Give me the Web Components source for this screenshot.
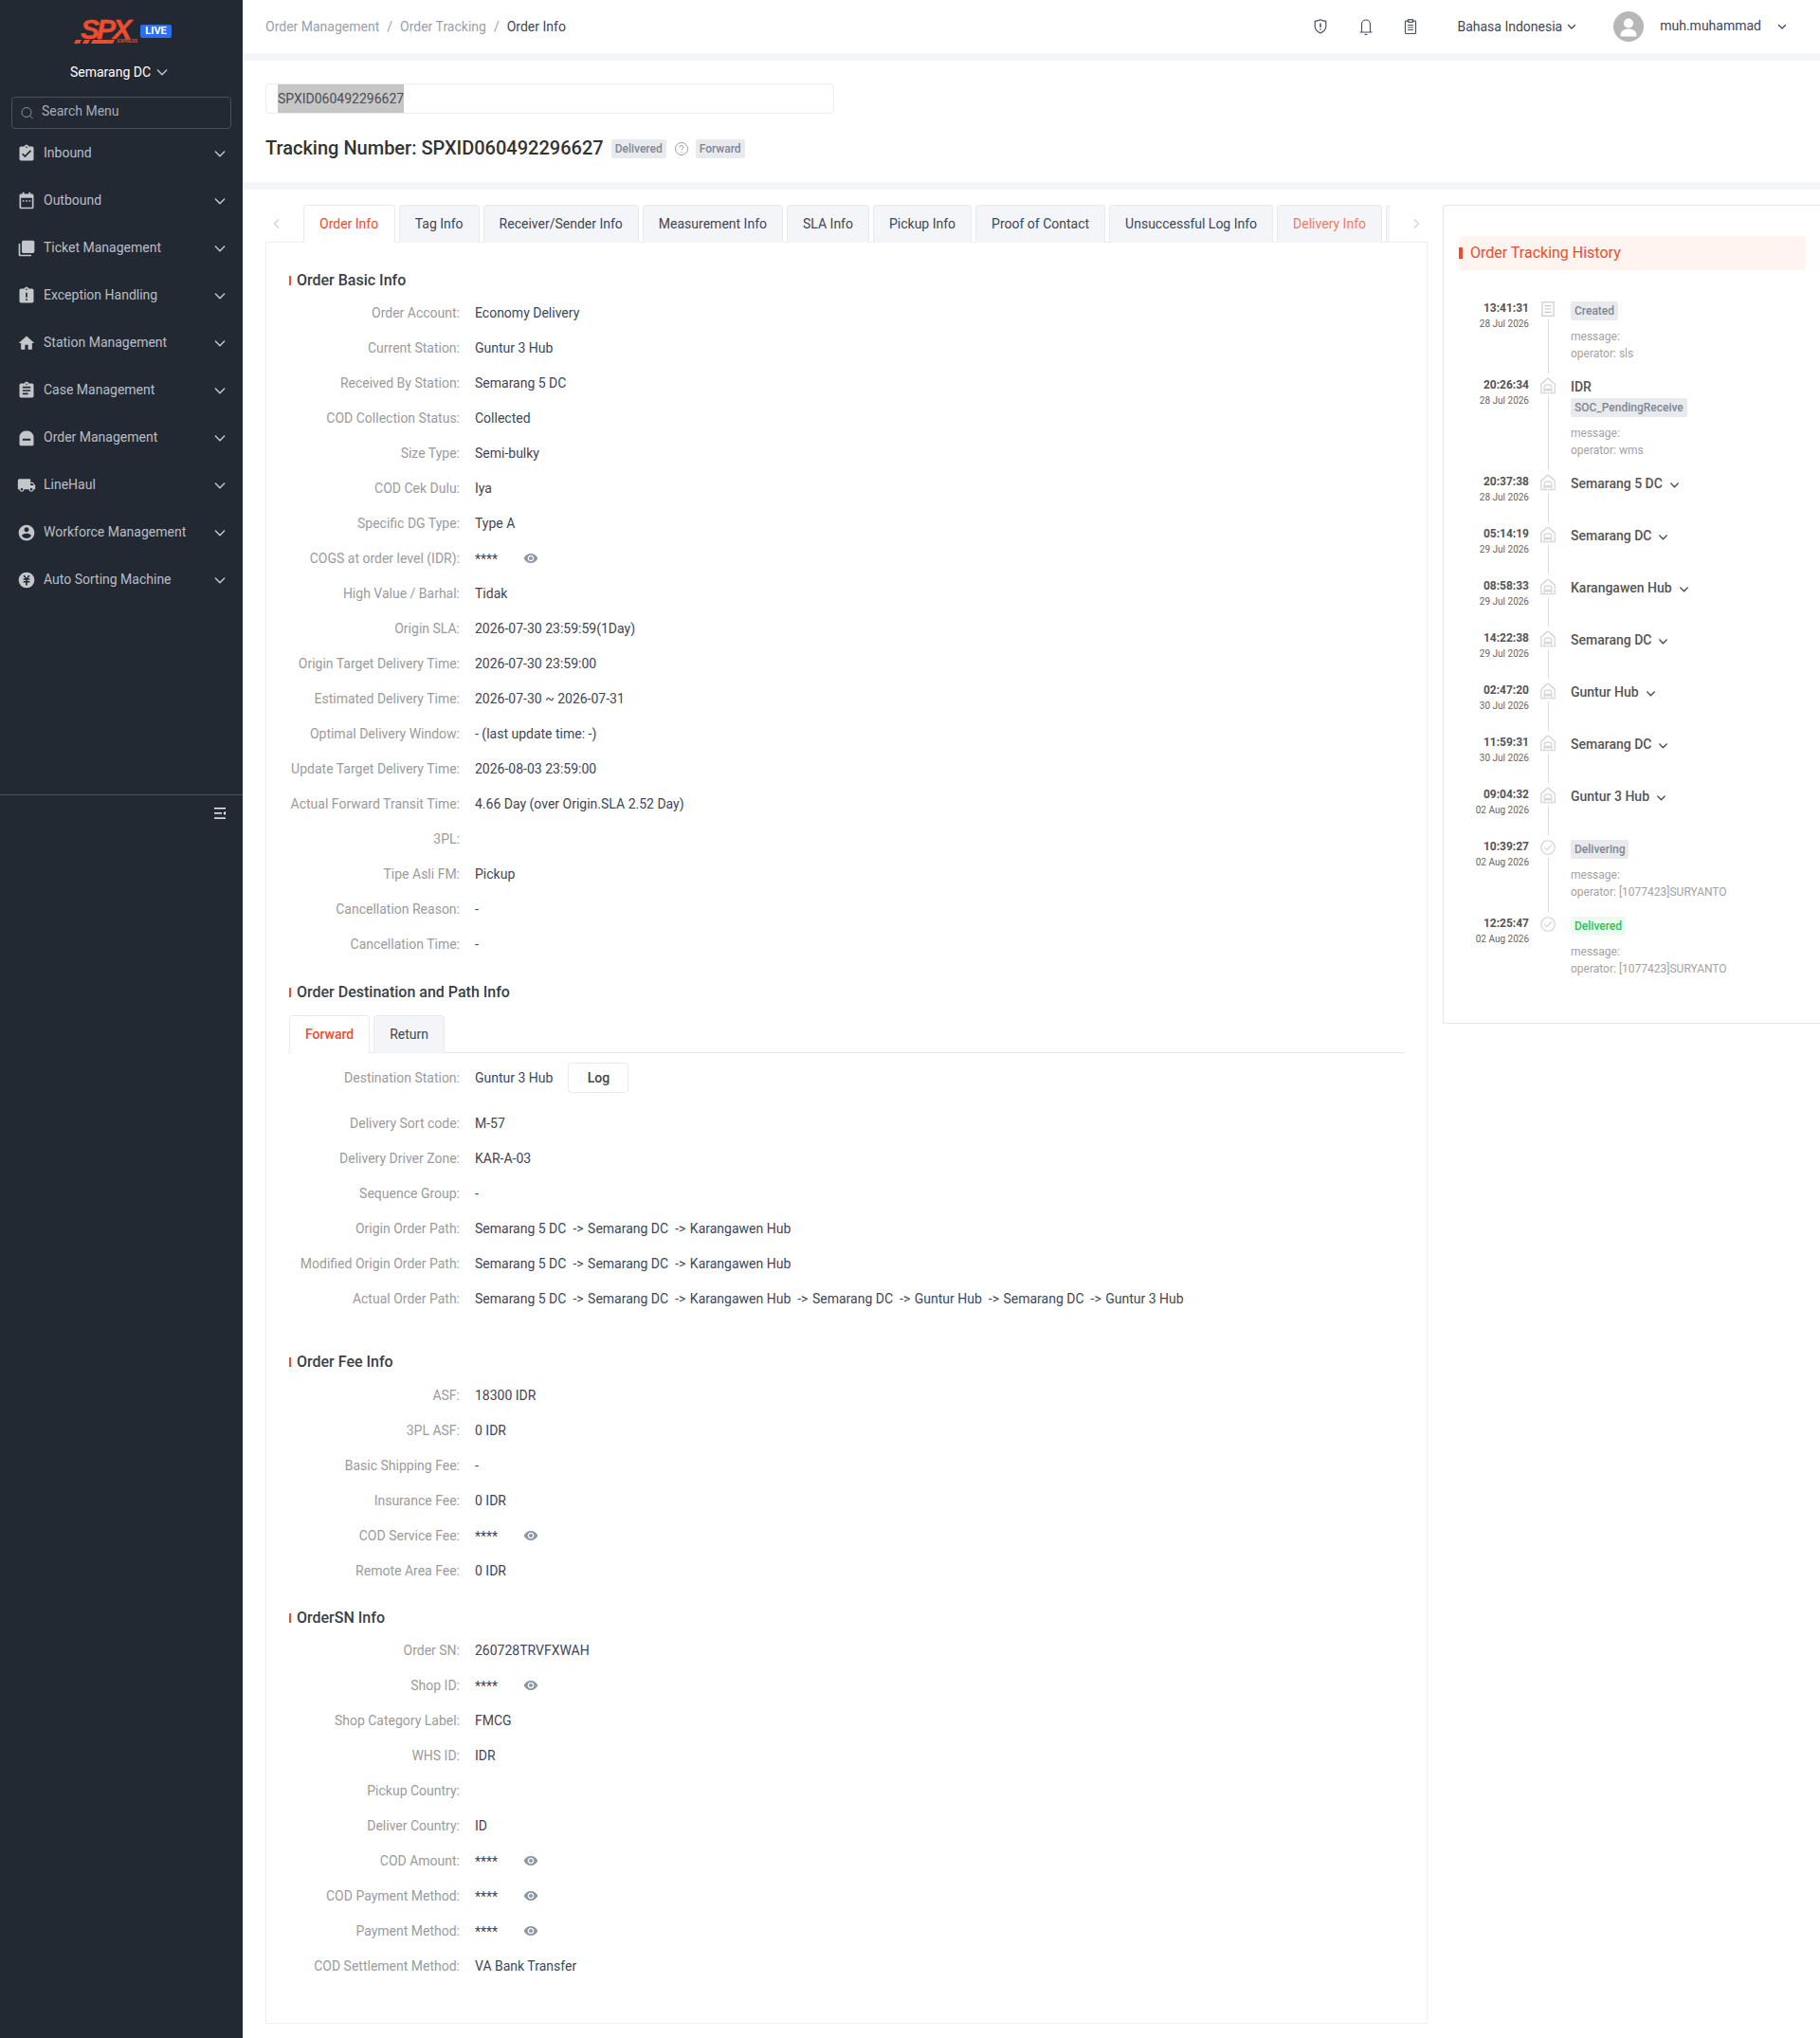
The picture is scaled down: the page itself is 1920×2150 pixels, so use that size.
<!DOCTYPE html>
<html lang="en">
<head>
<meta charset="utf-8">
<title>Order Info</title>
<style>
html,body{margin:0;padding:0;background:#fff;font-family:Roboto,"Noto Sans",sans-serif;font-size:14px;color:#3f4655}
</style>
</head>
<body>
<app-shell>
  <side-nav slot="side">
    <nav-item icon="inbound">Inbound</nav-item>
    <nav-item icon="outbound">Outbound</nav-item>
    <nav-item icon="ticket">Ticket Management</nav-item>
    <nav-item icon="exception">Exception Handling</nav-item>
    <nav-item icon="home">Station Management</nav-item>
    <nav-item icon="case">Case Management</nav-item>
    <nav-item icon="order">Order Management</nav-item>
    <nav-item icon="truck">LineHaul</nav-item>
    <nav-item icon="person">Workforce Management</nav-item>
    <nav-item icon="yen">Auto Sorting Machine</nav-item>
  </side-nav>
  <top-bar slot="top"></top-bar>
  <track-header slot="head" number="SPXID060492296627"></track-header>
  <info-tabs slot="left">
    <info-section title="Order Basic Info">
      <info-row label="Order Account">Economy Delivery</info-row>
      <info-row label="Current Station">Guntur 3 Hub</info-row>
      <info-row label="Received By Station">Semarang 5 DC</info-row>
      <info-row label="COD Collection Status">Collected</info-row>
      <info-row label="Size Type">Semi-bulky</info-row>
      <info-row label="COD Cek Dulu">Iya</info-row>
      <info-row label="Specific DG Type">Type A</info-row>
      <info-row label="COGS at order level (IDR)" masked></info-row>
      <info-row label="High Value / Barhal">Tidak</info-row>
      <info-row label="Origin SLA">2026-07-30 23:59:59(1Day)</info-row>
      <info-row label="Origin Target Delivery Time">2026-07-30 23:59:00</info-row>
      <info-row label="Estimated Delivery Time">2026-07-30 ~ 2026-07-31</info-row>
      <info-row label="Optimal Delivery Window">- (last update time: -)</info-row>
      <info-row label="Update Target Delivery Time">2026-08-03 23:59:00</info-row>
      <info-row label="Actual Forward Transit Time">4.66 Day (over Origin.SLA 2.52 Day)</info-row>
      <info-row label="3PL"></info-row>
      <info-row label="Tipe Asli FM">Pickup</info-row>
      <info-row label="Cancellation Reason">-</info-row>
      <info-row label="Cancellation Time">-</info-row>
    </info-section>
    <info-section title="Order Destination and Path Info" gap="21">
      <sub-tabs></sub-tabs>
      <info-row label="Destination Station" log>Guntur 3 Hub</info-row>
      <info-row label="Delivery Sort code">M-57</info-row>
      <info-row label="Delivery Driver Zone">KAR-A-03</info-row>
      <info-row label="Sequence Group">-</info-row>
      <info-row label="Origin Order Path"><path-line stops="Semarang 5 DC|Semarang DC|Karangawen Hub"></path-line></info-row>
      <info-row label="Modified Origin Order Path"><path-line stops="Semarang 5 DC|Semarang DC|Karangawen Hub"></path-line></info-row>
      <info-row label="Actual Order Path"><path-line stops="Semarang 5 DC|Semarang DC|Karangawen Hub|Semarang DC|Guntur Hub|Semarang DC|Guntur 3 Hub"></path-line></info-row>
    </info-section>
    <info-section title="Order Fee Info" gap="37" after="6">
      <info-row label="ASF">18300 IDR</info-row>
      <info-row label="3PL ASF">0 IDR</info-row>
      <info-row label="Basic Shipping Fee">-</info-row>
      <info-row label="Insurance Fee">0 IDR</info-row>
      <info-row label="COD Service Fee" masked></info-row>
      <info-row label="Remote Area Fee">0 IDR</info-row>
    </info-section>
    <info-section title="OrderSN Info">
      <info-row label="Order SN">260728TRVFXWAH</info-row>
      <info-row label="Shop ID" masked></info-row>
      <info-row label="Shop Category Label">FMCG</info-row>
      <info-row label="WHS ID">IDR</info-row>
      <info-row label="Pickup Country"></info-row>
      <info-row label="Deliver Country">ID</info-row>
      <info-row label="COD Amount" masked></info-row>
      <info-row label="COD Payment Method" masked></info-row>
      <info-row label="Payment Method" masked></info-row>
      <info-row label="COD Settlement Method">VA Bank Transfer</info-row>
    </info-section>
  </info-tabs>
  <history-panel slot="right">
    <history-item time="13:41:31" date="28 Jul 2026" icon="doc" tag="Created" operator="sls"></history-item>
    <history-item time="20:26:34" date="28 Jul 2026" icon="hub" name="IDR" tag="SOC_PendingReceive" operator="wms"></history-item>
    <history-item time="20:37:38" date="28 Jul 2026" icon="hub" name="Semarang 5 DC" fold></history-item>
    <history-item time="05:14:19" date="29 Jul 2026" icon="hub" name="Semarang DC" fold></history-item>
    <history-item time="08:58:33" date="29 Jul 2026" icon="hub" name="Karangawen Hub" fold></history-item>
    <history-item time="14:22:38" date="29 Jul 2026" icon="hub" name="Semarang DC" fold></history-item>
    <history-item time="02:47:20" date="30 Jul 2026" icon="hub" name="Guntur Hub" fold></history-item>
    <history-item time="11:59:31" date="30 Jul 2026" icon="hub" name="Semarang DC" fold></history-item>
    <history-item time="09:04:32" date="02 Aug 2026" icon="hub" name="Guntur 3 Hub" fold></history-item>
    <history-item time="10:39:27" date="02 Aug 2026" icon="check" tag="Delivering" operator="[1077423]SURYANTO"></history-item>
    <history-item time="12:25:47" date="02 Aug 2026" icon="check" tag="Delivered" green operator="[1077423]SURYANTO" last></history-item>
  </history-panel>
</app-shell>

<script>
const ICONS = {
  inbound:'<path d="M19 3h-4.18C14.4 1.84 13.3 1 12 1c-1.3 0-2.4.84-2.82 2H5c-1.1 0-2 .9-2 2v14c0 1.1.9 2 2 2h14c1.1 0 2-.9 2-2V5c0-1.1-.9-2-2-2zm-7 0c.55 0 1 .45 1 1s-.45 1-1 1-1-.45-1-1 .45-1 1-1zm-2 14l-4-4 1.41-1.41L10 14.17l6.59-6.59L18 9l-8 8z"/>',
  outbound:'<path fill-rule="evenodd" d="M7 1h2v2h6V1h2v2h2a2 2 0 0 1 2 2v15a2 2 0 0 1-2 2H5a2 2 0 0 1-2-2V5a2 2 0 0 1 2-2h2V1zM5 8v12h14V8H5zm2 3h2v2H7v-2zm4 0h2v2h-2v-2zm4 0h2v2h-2v-2z"/>',
  ticket:'<path d="M4 6H2v14c0 1.1.9 2 2 2h14v-2H4V6zm16-4H8c-1.1 0-2 .9-2 2v12c0 1.1.9 2 2 2h12c1.1 0 2-.9 2-2V4c0-1.1-.9-2-2-2z"/>',
  exception:'<path d="M19 3h-4.18C14.4 1.84 13.3 1 12 1c-1.3 0-2.4.84-2.82 2H5c-1.1 0-2 .9-2 2v14c0 1.1.9 2 2 2h14c1.1 0 2-.9 2-2V5c0-1.1-.9-2-2-2zm-6 15h-2v-2h2v2zm0-4h-2V8h2v6zm-1-9c-.55 0-1-.45-1-1s.45-1 1-1 1 .45 1 1-.45 1-1 1z"/>',
  home:'<path d="M10 20v-6h4v6h5v-8h3L12 3 2 12h3v8z"/>',
  case:'<path d="M19 3h-4.18C14.4 1.84 13.3 1 12 1c-1.3 0-2.4.84-2.82 2H5c-1.1 0-2 .9-2 2v14c0 1.1.9 2 2 2h14c1.1 0 2-.9 2-2V5c0-1.1-.9-2-2-2zm-7 0c.55 0 1 .45 1 1s-.45 1-1 1-1-.45-1-1 .45-1 1-1zm2 14H7v-2h7v2zm3-4H7v-2h10v2zm0-4H7V7h10v2z"/>',
  order:'<path fill-rule="evenodd" d="M3 11a8 8 0 0 1 8-8h2a8 8 0 0 1 8 8v9a2 2 0 0 1-2 2H5a2 2 0 0 1-2-2v-9zm4 2v2.400h10V13H7z"/>',
  truck:'<path d="M20 8h-3V4H3c-1.1 0-2 .9-2 2v11h2c0 1.66 1.34 3 3 3s3-1.34 3-3h6c0 1.66 1.34 3 3 3s3-1.34 3-3h2v-5l-3-4zM6 18.500c-.83 0-1.500-.67-1.500-1.500s.67-1.500 1.500-1.500 1.500.67 1.500 1.500-.67 1.500-1.500 1.500zm13.500-9l1.960 2.500H17V9.500h2.500zm-1.500 9c-.83 0-1.500-.67-1.500-1.500s.67-1.500 1.500-1.500 1.500.67 1.500 1.500-.67 1.500-1.500 1.500z"/>',
  person:'<path d="M12 2C6.48 2 2 6.48 2 12s4.48 10 10 10 10-4.48 10-10S17.52 2 12 2zm0 3c1.66 0 3 1.34 3 3s-1.34 3-3 3-3-1.34-3-3 1.34-3 3-3zm0 14.200c-2.500 0-4.710-1.280-6-3.220.03-1.990 4-3.080 6-3.080 1.990 0 5.970 1.090 6 3.080-1.290 1.940-3.500 3.220-6 3.220z"/>',
  yen:'<path fill-rule="evenodd" d="M12 2a10 10 0 1 0 0 20 10 10 0 0 0 0-20zM7.600 6h2.300L12 9.600 14.100 6h2.300l-2.700 4H16v1.700h-3v1.500h3V15h-3v3.500h-2V15H8v-1.800h3v-1.500H8V10h2.300L7.600 6z"/>'
};
const chevron=(s,c,w=2)=>`<svg width="${s}" height="${s}" viewBox="0 0 24 24" fill="none" stroke="${c}" stroke-width="${w}" stroke-linecap="round" stroke-linejoin="round" style="display:block;flex:none"><path d="M5 9l7 7 7-7"/></svg>`;
const EYE='<svg width="16" height="16" viewBox="0 0 24 24" fill="#8d97a5" style="display:block"><path d="M12 4.500C7 4.500 2.730 7.610 1 12c1.730 4.390 6 7.500 11 7.500s9.270-3.110 11-7.500c-1.730-4.390-6-7.500-11-7.500zM12 17c-2.760 0-5-2.240-5-5s2.240-5 5-5 5 2.240 5 5-2.240 5-5 5zm0-8c-1.660 0-3 1.340-3 3s1.340 3 3 3 3-1.340 3-3-1.340-3-3-3z"/></svg>';

class Base extends HTMLElement{
  render(html){ if(!this.shadowRoot) this.attachShadow({mode:'open'}); this.shadowRoot.innerHTML=html; }
}

class AppShell extends Base{
  connectedCallback(){this.render(`<style>
    :host{display:flex;width:1920px;height:2150px;overflow:hidden;background:#fff}
    .side{flex:none;width:256px}
    .main{flex:1;min-width:0;display:flex;flex-direction:column;background:#f4f5f9}
    .band{display:block;margin-bottom:8px;background:#fff}
    .content{flex:1;display:flex;gap:16px;background:#fff;padding:16px 0 0 24px;min-height:0}
    .left{flex:none;width:1226px}
    .right{flex:1;min-width:0}
  </style>
  <div class="side"><slot name="side"></slot></div>
  <div class="main">
    <div class="band"><slot name="top"></slot></div>
    <div class="band"><slot name="head"></slot></div>
    <div class="content">
      <div class="left"><slot name="left"></slot></div>
      <div class="right"><slot name="right"></slot></div>
    </div>
  </div>`);}
}
class SideNav extends Base{
  connectedCallback(){this.render(`<style>
    :host{display:flex;flex-direction:column;height:2150px;background:#222933;color:#b9bec6;font:14px Roboto,sans-serif}
    .logo{height:60px;box-sizing:border-box;padding:20px 0 0 78px;display:flex;align-items:flex-start}
    .mark{position:relative;width:67px;height:26px}
    .spx{font:italic 700 30px/22px "Liberation Sans",Arial,sans-serif;color:#ee4d2d;display:block;letter-spacing:-3px;margin-left:7px;white-space:nowrap;-webkit-text-stroke:.4px #ee4d2d}
    .exp{position:absolute;right:0;top:22px;font:700 4.500px/4px "Liberation Sans",sans-serif;color:#ee4d2d}
    .stripes{position:absolute;left:0;top:22px}
    .live{flex:none;box-sizing:border-box;width:33px;height:14px;margin:6px 0 0 3px;background:#2a6ff0;color:#fff;font:700 11px/14px Roboto,sans-serif;text-align:center;border-radius:2px}
    .station{display:flex;align-items:center;justify-content:center;gap:4px;height:32px;color:#fff;padding-right:3px}
    .search{display:flex;align-items:center;gap:7px;box-sizing:border-box;margin:10px 12px 0;height:34px;border:1px solid #4a515c;border-radius:4px;padding:0 10px 0 8px;color:#a5adb8}
    .search span{position:relative;top:-2px}
    .items{flex:none;height:500px;margin-top:1px}
    .rule{height:1px;background:#4a515c;margin-top:201px}
    .foot{display:flex;justify-content:flex-end;padding:13px 18px 0}
  </style>
  <div class="logo">
    <div class="mark">
      <span class="spx">SPX</span>
      <svg class="stripes" width="43" height="4" viewBox="0 0 43 4" fill="#ee4d2d"><path d="M2 0h6L6 4H0zM11 0h6l-2 4H9zM20 0h23l-2 4H18z"/></svg>
      <span class="exp">EXPRESS</span>
    </div>
    <span class="live">LIVE</span>
  </div>
  <div class="station">Semarang DC ${chevron(16,'#c3c6cb',2.2)}</div>
  <div class="search">
    <svg width="16" height="16" viewBox="0 0 16 16" fill="none" stroke="#8b929c" stroke-width="1"><circle cx="7" cy="7.500" r="5"/><path d="M10.600 11.200l3 3"/></svg>
    <span>Search Menu</span>
  </div>
  <div class="items"><slot></slot></div>
  <div class="rule"></div>
  <div class="foot">
    <svg width="12" height="12" viewBox="0 0 12 12" fill="#fff" style="display:block"><rect width="12" height="1.400" y="0"/><rect width="8" height="1.400" y="5.200"/><path d="M12 3.800v4.200L9.400 6z"/><rect width="12" height="1.400" y="10.400"/></svg>
  </div>`);}
}
class NavItem extends Base{
  connectedCallback(){this.render(`<style>
    :host{display:flex;align-items:center;height:50px;box-sizing:border-box;padding:0 16px 0 18px;color:#b9bec6;font:14px Roboto,sans-serif}
    svg.i{width:20px;height:20px;fill:#c3c6cb;margin-right:8px;flex:none}
    .t{flex:1;position:relative;top:-1px;white-space:nowrap}
  </style>
  <svg class="i" viewBox="0 0 24 24">${ICONS[this.getAttribute('icon')]}</svg>
  <span class="t"><slot></slot></span>${chevron(16,'#c3c6cb',2.2)}`);}
}
class TopBar extends Base{
  connectedCallback(){this.render(`<style>
    :host{display:flex;align-items:center;height:56px;box-sizing:border-box;padding:0 34px 0 24px;background:#fff;font:14px Roboto,sans-serif;color:#9aa1ab}
    .crumb b{font-weight:400;color:#3f4655}
    .crumb i{font-style:normal;margin:0 8px}
    .r{margin-left:auto;display:flex;align-items:center;color:#3f4655}
    .ic{display:block;margin-right:27px}
    .ic.w{margin-right:28px}
    .lang{display:flex;align-items:center;gap:4px;margin-left:12px}
    .ava{width:32px;height:32px;border-radius:50%;background:#b7b7b7;margin-left:38px;overflow:hidden}
    .ava svg{display:block}
    .u{margin-left:17px;position:relative;top:-1px}
  </style>
  <div class="crumb">Order Management<i>/</i>Order Tracking<i>/</i><b>Order Info</b></div>
  <div class="r">
    <svg class="ic w" width="20" height="20" viewBox="0 0 20 20" fill="none" stroke="#4a5160" stroke-width="1.200"><path d="M10 2.800c2 1.100 3.800 1.500 5.800 1.600v5.400c0 3.400-2.500 5.600-5.800 7.200-3.300-1.600-5.800-3.800-5.800-7.200V4.400C6.200 4.300 8 3.900 10 2.800z"/><path d="M10 6.500v4.500M10 12.200v1.300" stroke-width="1.500"/></svg>
    <svg class="ic" width="20" height="20" viewBox="0 0 20 20" fill="none" stroke="#4a5160" stroke-width="1.200"><path d="M3.500 16h13M5.500 16V7.500a4.500 4.500 0 0 1 9 0V16M8.600 18.400h2.800"/></svg>
    <svg class="ic" width="20" height="20" viewBox="0 0 20 20" fill="none" stroke="#4a5160" stroke-width="1.200"><rect x="4.500" y="4.200" width="11" height="13.300" rx=".8"/><rect x="7.500" y="2.700" width="5" height="2.600" fill="#fff"/><path d="M7 8.500h6M7 11h6M7 13.500h6"/></svg>
    <div class="lang">Bahasa Indonesia ${chevron(12,'#3f4655',2.6)}</div>
    <div class="ava"><svg width="32" height="32" viewBox="0 0 32 32" fill="#fff"><circle cx="16" cy="12.500" r="5"/><path d="M7.500 25c0-4 3.500-6.500 8.500-6.500s8.500 2.500 8.500 6.500c0 1-.5 1.500-1.500 1.500H9c-1 0-1.500-.5-1.500-1.500z"/></svg></div>
    <div class="u">muh.muhammad</div>
    <div style="margin-left:16px">${chevron(12,'#3f4655',2.6)}</div>
  </div>`);}
}
class StatusTag extends Base{
  connectedCallback(){this.render(`<style>
    :host{display:inline-block;height:20px;padding:0 4px;border-radius:2px;background:#e8eaed;color:#7f8794;font:500 12px/20px Roboto,sans-serif;white-space:nowrap}
    :host([green]){background:#edfbf1;color:#20c75a}
  </style><slot></slot>`);}
}
class TrackHeader extends Base{
  connectedCallback(){const n=this.getAttribute('number');this.render(`<style>
    :host{display:block;height:128px;box-sizing:border-box;padding:24px 0 0 24px;background:#fff;font:14px Roboto,sans-serif}
    .box{box-sizing:border-box;width:600px;height:32px;border:1px solid #eceef1;border-radius:4px;padding:0 0 0 12px;display:flex;align-items:stretch}
    .sel{background:#c6c6c6;color:#4a4f57;line-height:30px;white-space:nowrap}
    .title{display:flex;align-items:center;margin-top:26px;height:22px;gap:8px}
    h1{margin:0;font:500 20px/22px Roboto,sans-serif;color:#333;white-space:nowrap;position:relative;top:-1px}
    svg{display:block;margin:0 -1px 0 0}
  </style>
  <div class="box"><span class="sel">${n}</span></div>
  <div class="title"><h1>Tracking Number: ${n}</h1><status-tag>Delivered</status-tag>
    <svg width="16" height="16" viewBox="0 0 16 16" fill="none" stroke="#9aa1ab"><circle cx="8" cy="8" r="6.500"/><path d="M6 6.400a2 2 0 1 1 3 1.700c-.7.4-1 .8-1 1.500M8 11v1"/></svg>
    <status-tag>Forward</status-tag></div>`);}
}
class InfoTabs extends Base{
  connectedCallback(){
    const tabs=['Order Info','Tag Info','Receiver/Sender Info','Measurement Info','SLA Info','Pickup Info','Proof of Contact','Unsuccessful Log Info','Delivery Info',''];
    this.render(`<style>
    :host{display:block;font:14px Roboto,sans-serif}
    .bar{display:flex;height:40px;position:relative;z-index:1}
    .arrow{flex:none;width:40px;display:flex;align-items:center;justify-content:center;padding-right:16px;box-sizing:border-box}
    .arrow.r{width:40px;padding:0 0 0 16px;margin-left:auto}
    .scroll{flex:1;min-width:0;overflow:hidden;display:flex;gap:4px;height:40px}
    .tab{flex:none;box-sizing:border-box;height:40px;min-width:80px;padding:0 16px;line-height:39px;background:#f4f5f9;border:1px solid #e8eaf0;border-bottom:0;border-radius:4px 4px 0 0;color:#3f4655;white-space:nowrap}
    .tab.on{background:#fff;color:#ee4d2d;padding-right:16.500px}
    .tab.warn{color:#f57a5e}
    .card{box-sizing:border-box;border:1px solid #eceef3;margin-top:-1px;height:1880px;padding:0 23px}
  </style>
  <div class="bar">
    <div class="arrow"><svg width="12" height="12" viewBox="0 0 12 12" fill="none" stroke="#ccd0d5" stroke-width="1.200"><path d="M8 1.500L3.500 6 8 10.500"/></svg></div>
    <div class="scroll">${tabs.map((t,i)=>`<div class="tab${i==0?' on':''}${i==8?' warn':''}">${t}</div>`).join('')}</div>
    <div class="arrow r"><svg width="12" height="12" viewBox="0 0 12 12" fill="none" stroke="#ccd0d5" stroke-width="1.200"><path d="M4 1.500L8.500 6 4 10.500"/></svg></div>
  </div>
  <div class="card"><slot></slot></div>`);}
}
class InfoSection extends Base{
  connectedCallback(){const g=this.getAttribute('gap')||20;const af=this.getAttribute('after')||5;const t=this.getAttribute('title');this.removeAttribute('title');this.render(`<style>
    :host{display:block;margin-top:${g}px;font:14px Roboto,sans-serif}
    :host(:first-child){margin-top:28px}
    h2{position:relative;margin:0 0 ${af}px;height:22px;font:500 16px/24px Roboto,sans-serif;color:#3a3f47;padding-left:9px}
    h2::before{content:"";position:absolute;left:1px;top:7px;width:2px;height:10px;background:#ee4d2d}
  </style><h2>${t}</h2><slot></slot>`);}
}
class InfoRow extends Base{
  connectedCallback(){
    const masked=this.hasAttribute('masked'),log=this.hasAttribute('log');
    this.render(`<style>
    :host{display:flex;align-items:center;height:37px;font:14px Roboto,sans-serif;color:#3f4655}
    :host([log]){height:36px;margin-bottom:11px}
    .l{flex:none;width:181px;text-align:right;color:#9b9b9b;white-space:nowrap;margin-right:16px}
    .v{white-space:nowrap;display:flex;align-items:center}
    .eye{margin-left:27px}
    .stars{position:relative;top:1px}
    .log{box-sizing:border-box;width:64px;height:32px;margin-left:16px;border:1px solid #e8eaf0;border-radius:4px;text-align:center;line-height:30px;font-weight:500;color:#3f4655}
  </style>
  <div class="l">${this.getAttribute('label')}:</div>
  <div class="v">${masked?`<span class="stars">****</span><span class="eye">${EYE}</span>`:'<slot></slot>'}${log?'<span class="log">Log</span>':''}</div>`);}
}
class SubTabs extends Base{
  connectedCallback(){this.render(`<style>
    :host{display:flex;gap:4px;height:39px;margin:14px 0 8px;border-bottom:1px solid #e8eaf0;font:14px Roboto,sans-serif}
    div{box-sizing:border-box;height:40px;padding:0 16px;line-height:39px;border:1px solid #e8eaf0;border-bottom:0;border-radius:4px 4px 0 0;background:#f4f5f9;color:#3f4655}
    .on{background:#fff;color:#ee4d2d;font-weight:500;margin-left:1px}
  </style><div class="on">Forward</div><div>Return</div>`);}
}
class PathLine extends Base{
  connectedCallback(){const s=this.getAttribute('stops').split('|');this.render(`<style>
    :host{display:inline;white-space:nowrap}
    i{font-style:normal;margin:0 4.500px 0 3.500px}
  </style>${s.join('<i> -&gt;</i>')}`);}
}
class HistoryPanel extends Base{
  connectedCallback(){this.render(`<style>
    :host{display:block;box-sizing:border-box;height:864px;border:1px solid #e5e7eb;border-right:0;border-radius:4px 0 0 0;padding:32px 0 0 16px;font:14px Roboto,sans-serif}
    h3{position:relative;box-sizing:border-box;width:366px;height:36px;margin:0 0 31px;background:#fff4f0;border-radius:4px;color:#ee4d2d;font:400 16px/35px Roboto,sans-serif;padding-left:12px}
    h3::before{content:"";position:absolute;left:0;top:12px;width:4px;height:12px;background:#ee4d2d}
  </style><h3>Order Tracking History</h3><slot></slot>`);}
}
class HistoryItem extends Base{
  connectedCallback(){
    const a=n=>this.getAttribute(n), icon=a('icon');
    const gl={
      doc:'<rect x="3.500" y="2.500" width="11" height="13" fill="none" stroke="#c8c8c8"/><path d="M6 6h6M6 9h6M6 12h6" stroke="#c8c8c8" fill="none"/>',
      hub:'<path d="M2.500 16V7.500L8 2.500a1.500 1.500 0 0 1 2 0l5.500 5V16z" fill="none" stroke="#cfcfcf"/><path d="M5.500 16v-5.500c0-1.700 1.200-2.500 3.500-2.500s3.500.8 3.500 2.500V16" fill="none" stroke="#d2d2d2"/><path d="M5.500 11.500h7v2.500h-7z" fill="#d8d8d8"/>',
      check:'<circle cx="9" cy="9" r="6.500" fill="none" stroke="#cfcfcf"/><path d="M5.800 9.200l2.300 2.300 4.200-4.800" fill="none" stroke="#cfcfcf"/>'
    }[icon];
    this.render(`<style>
    :host{display:grid;grid-template-columns:74px 20px 1fr;box-sizing:border-box;min-height:55px;padding-bottom:15px;position:relative;font:14px Roboto,sans-serif}
    .t{text-align:right}
    .t b{display:block;font:700 12px/18px Roboto,sans-serif;color:#555}
    .t span{display:block;margin-top:1px;font:10px/14px Roboto,sans-serif;color:#666;white-space:nowrap}
    .ic{margin-left:10px;width:20px;display:flex;justify-content:center}
    .ic svg{display:block}
    .line{position:absolute;left:93.500px;width:1px;top:21px;bottom:3px;background:#dcdcdc}
    .c{margin-left:14px;padding-left:10px;min-width:0}
    .n{display:flex;align-items:center;gap:6px;font:500 14px/22px Roboto,sans-serif;color:#555;white-space:nowrap;height:22px}
    .n svg{position:relative;top:1px}
    status-tag{display:block;width:max-content;margin-top:${a('name')?'1px':'2px'}}
    .m{margin-top:8px;font:12px/18px Roboto,sans-serif;color:#a3a3a3;white-space:nowrap}
  </style>
  <div class="t"><b>${a('time')}</b><span>${a('date')}</span></div>
  <div class="ic"><svg width="20" height="20" viewBox="0 0 18 18">${gl}</svg></div>
  ${this.hasAttribute('last')?'':'<div class="line"></div>'}
  <div class="c">
    ${a('name')?`<div class="n">${a('name')}${this.hasAttribute('fold')?chevron(13,'#3f4655',2.6):''}</div>`:''}
    ${a('tag')?`<status-tag ${this.hasAttribute('green')?'green':''}>${a('tag')}</status-tag>`:''}
    ${a('operator')?`<div class="m">message:<br>operator: ${a('operator')}</div>`:''}
  </div>`);}
}
customElements.define('status-tag',StatusTag);
customElements.define('app-shell',AppShell);
customElements.define('side-nav',SideNav);
customElements.define('nav-item',NavItem);
customElements.define('top-bar',TopBar);
customElements.define('track-header',TrackHeader);
customElements.define('info-tabs',InfoTabs);
customElements.define('info-section',InfoSection);
customElements.define('info-row',InfoRow);
customElements.define('sub-tabs',SubTabs);
customElements.define('path-line',PathLine);
customElements.define('history-panel',HistoryPanel);
customElements.define('history-item',HistoryItem);
</script>
</body>
</html>
